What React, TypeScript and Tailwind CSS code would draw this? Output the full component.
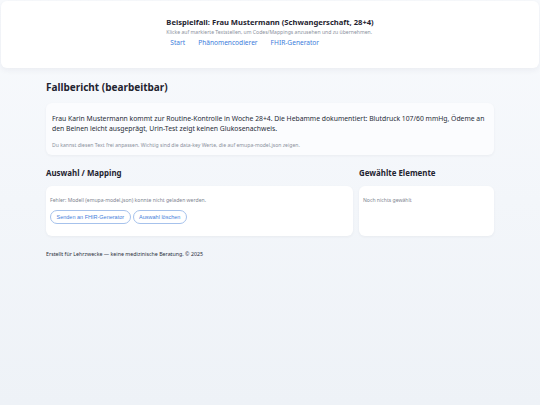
import React from 'react';

const FONT = { fontFamily: '"Noto Sans", "Open Sans", sans-serif' };
const BTN_FONT = { fontFamily: '"Liberation Sans", Arial, sans-serif' };

const NAV = ['Start', 'Phänomencodierer', 'FHIR-Generator'];

export default function App() {
  return (
    <div
      className="min-h-[405px] w-[540px] bg-gradient-to-b from-[#f8fafd] to-[#eef2f7] pt-px text-[#1f2430]"
      style={FONT}
    >
      <header className="mx-px flex h-[67px] justify-center rounded-md bg-white shadow-[0_2px_6px_rgba(30,40,60,0.06)]">
        <div className="pt-[16px]">
          <h1 className="text-[7.6px] font-bold leading-[10px] text-[#1f2430]">
            Beispielfall: Frau Mustermann (Schwangerschaft, 28+4)
          </h1>
          <p className="mt-[1px] text-[5.1px] leading-[8px] text-[#8a909c]">
            Klicke auf markierte Textstellen, um Codes/Mappings anzusehen und zu übernehmen.
          </p>
          <nav className="mt-[2px] flex gap-[13px] pl-[4px] text-[6.6px] leading-[10px] text-[#3b7bdb]">
            {NAV.map(n => (
              <a key={n} href="#" className="hover:underline">{n}</a>
            ))}
          </nav>
        </div>
      </header>

      <main className="mx-[46px] mt-[12px]">
        <h2 className="text-[10px] font-bold leading-[14px]">Fallbericht (bearbeitbar)</h2>

        <section className="mt-[9px] rounded-md bg-[#fbfcfe] px-[6px] pt-[11px] pb-[6px] shadow-[0_1px_3px_rgba(30,40,60,0.05)]">
          <p className="text-[6.8px] leading-[10px] text-[#262b36]">
            Frau Karin Mustermann kommt zur Routine-Kontrolle in Woche 28+4. Die Hebamme dokumentiert: Blutdruck 107/60 mmHg, Ödeme an den Beinen leicht ausgeprägt, Urin-Test zeigt keinen Glukosenachweis.
          </p>
          <p className="mt-[7px] text-[5.1px] leading-[8px] text-[#8a909c]">
            Du kannst diesen Text frei anpassen. Wichtig sind die data-key Werte, die auf emupa-model.json zeigen.
          </p>
        </section>

        <div className="mt-[12px] flex gap-[6px]">
          <div className="flex-1">
            <h3 className="text-[7.9px] font-bold leading-[12px]">Auswahl / Mapping</h3>
            <div className="mt-[7px] h-[50px] rounded-md bg-white px-[4px] pt-[10px] shadow-[0_1px_3px_rgba(30,40,60,0.05)]">
              <p className="text-[5.1px] leading-[8px] text-[#7d838f]">
                Fehler: Modell (emupa-model.json) konnte nicht geladen werden.
              </p>
              <div className="mt-[6px] flex gap-[2px] text-[5.5px]" style={BTN_FONT}>
                <button className="h-[14px] rounded-[7px] border border-[#a6c2ec] bg-white px-[5.5px] text-[#4580db]">
                  Senden an FHIR-Generator
                </button>
                <button className="h-[14px] rounded-[7px] border border-[#a6c2ec] bg-white px-[5.5px] text-[#4580db]">
                  Auswahl löschen
                </button>
              </div>
            </div>
          </div>
          <div className="w-[135px]">
            <h3 className="text-[7.9px] font-bold leading-[12px]">Gewählte Elemente</h3>
            <div className="mt-[7px] h-[50px] rounded-md bg-white px-[4px] pt-[10px] shadow-[0_1px_3px_rgba(30,40,60,0.05)]">
              <p className="text-[5.1px] leading-[8px] text-[#7d838f]">Noch nichts gewählt</p>
            </div>
          </div>
        </div>

        <footer className="mt-[14px] text-[5.3px] leading-[8px] text-[#2a2f3a]">
          Erstellt für Lehrzwecke — keine medizinische Beratung. © 2025
        </footer>
      </main>
    </div>
  );
}
